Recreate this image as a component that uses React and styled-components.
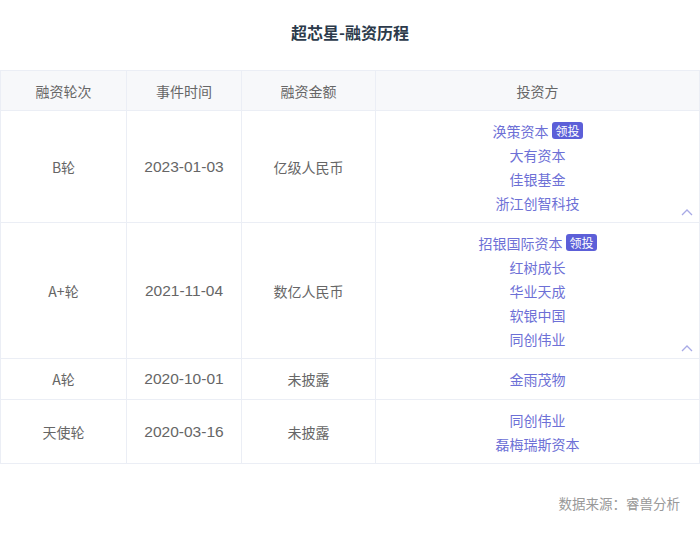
import React from "react";
import styled, { createGlobalStyle } from "styled-components";

const Global = createGlobalStyle`
  html, body { margin: 0; padding: 0; background: #fff; }
  body { font-family: "Liberation Sans", "Noto Sans CJK SC", sans-serif; }
`;

const Page = styled.div`
  width: 700px;
  height: 540px;
  display: flex;
  flex-direction: column;
  background: #fff;
`;

const Title = styled.h1`
  margin: 0;
  padding-top: 21px;
  height: 70px;
  box-sizing: border-box;
  text-align: center;
  font-size: 16px;
  line-height: 22px;
  font-weight: 700;
  color: #2c3a4b;
  font-family: "Noto Sans CJK SC", sans-serif;
`;

const Table = styled.table`
  width: 700px;
  border-collapse: collapse;
  table-layout: fixed;
  font-family: "Liberation Sans", "Noto Sans CJK SC", sans-serif;
  font-size: 14px;
  color: #666;
`;

const Th = styled.th`
  height: 39px;
  padding: 0;
  font-weight: 400;
  color: #666;
  background: #f7f8fa;
  border: 1px solid #ebeef5;
  text-align: center;
  font-family: "Noto Sans CJK SC", sans-serif;
`;

const Td = styled.td`
  position: relative;
  height: 41px;
  box-sizing: border-box;
  padding: 7.5px 4px;
  border: 1px solid #ebeef5;
  text-align: center;
  vertical-align: middle;
  line-height: 24px;
`;

const CellText = styled(Td)`
  font-family: ${(p) =>
    p.$cn ? '"Noto Sans CJK SC", sans-serif' : '"Liberation Sans", "Noto Sans CJK SC", sans-serif'};
  font-size: ${(p) => (p.$cn ? "14px" : "15.5px")};
`;

const Investor = styled.div`
  color: #6d70d6;
  line-height: 24px;
  font-family: "Noto Sans CJK SC", sans-serif;
  display: flex;
  justify-content: center;
  align-items: center;
  gap: 4px;
`;

const Badge = styled.span`
  display: inline-block;
  background: #5c5fd8;
  color: #fff;
  font-size: 12px;
  line-height: 17px;
  padding: 0 3px;
  border-radius: 3px;
`;

const Toggle = styled.span`
  position: absolute;
  right: 6px;
  bottom: 6px;
  width: 12px;
  height: 8px;
  display: block;
  line-height: 0;

  svg {
    display: block;
  }
`;

const Footer = styled.div`
  margin-top: 29px;
  padding-right: 20px;
  text-align: right;
  font-size: 13.5px;
  color: #999;
  font-family: "Noto Sans CJK SC", sans-serif;
`;

const rows = [
  {
    round: "B轮",
    date: "2023-01-03",
    amount: "亿级人民币",
    investors: [["涣策资本", true], ["大有资本"], ["佳银基金"], ["浙江创智科技"]],
    toggle: true,
  },
  {
    round: "A+轮",
    date: "2021-11-04",
    amount: "数亿人民币",
    investors: [["招银国际资本", true], ["红树成长"], ["华业天成"], ["软银中国"], ["同创伟业"]],
    toggle: true,
  },
  { round: "A轮", date: "2020-10-01", amount: "未披露", investors: [["金雨茂物"]] },
  { round: "天使轮", date: "2020-03-16", amount: "未披露", investors: [["同创伟业"], ["磊梅瑞斯资本"]] },
];

export default function App() {
  return (
    <Page>
      <Global />
      <Title>超芯星-融资历程</Title>
      <Table>
        <colgroup>
          <col style={{ width: 126 }} />
          <col style={{ width: 115 }} />
          <col style={{ width: 134 }} />
          <col />
        </colgroup>
        <thead>
          <tr>
            <Th>融资轮次</Th>
            <Th>事件时间</Th>
            <Th>融资金额</Th>
            <Th>投资方</Th>
          </tr>
        </thead>
        <tbody>
          {rows.map((r) => (
            <tr key={r.round}>
              <CellText $cn>{r.round}</CellText>
              <CellText>{r.date}</CellText>
              <CellText $cn>{r.amount}</CellText>
              <Td>
                {r.investors.map(([name, lead]) => (
                  <Investor key={name}>
                    {name}
                    {lead && <Badge>领投</Badge>}
                  </Investor>
                ))}
                {r.toggle && (
                  <Toggle>
                    <svg width="12" height="8" viewBox="0 0 12 8">
                      <path d="M1 7 L6 2 L11 7" fill="none" stroke="#a8aae6" strokeWidth="1.3" />
                    </svg>
                  </Toggle>
                )}
              </Td>
            </tr>
          ))}
        </tbody>
      </Table>
      <Footer>数据来源：睿兽分析</Footer>
    </Page>
  );
}
